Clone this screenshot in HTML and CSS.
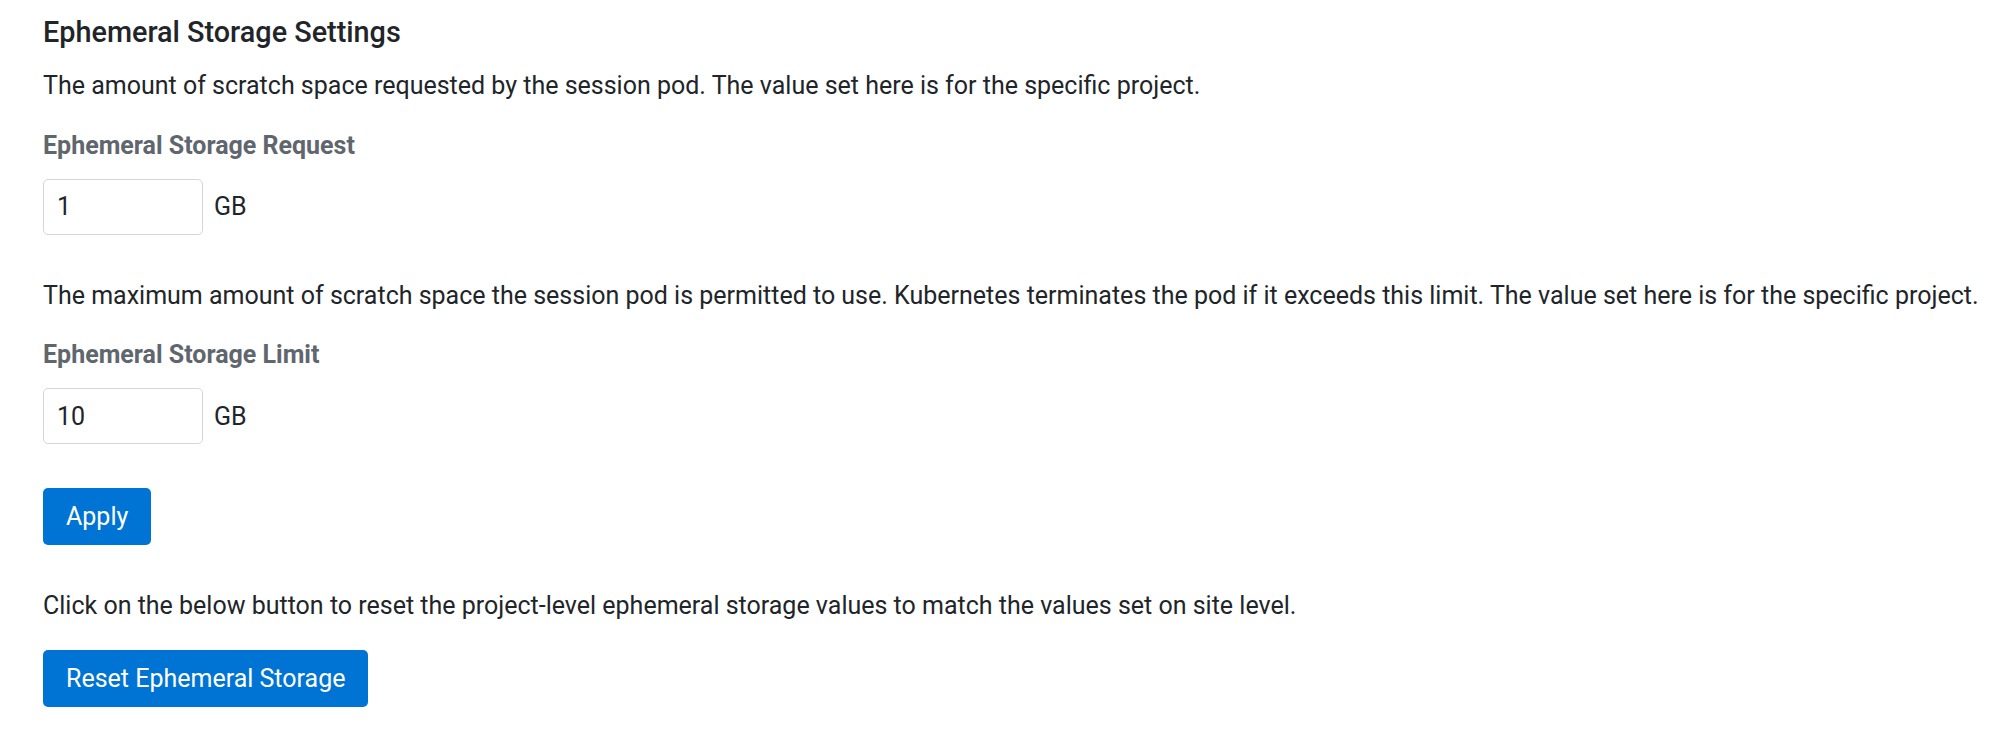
FILE: index.html
```html
<!DOCTYPE html>
<html>
<head>
	<meta charset="utf-8">
	<link rel="stylesheet" href="styles.css">
	<title>Ephemeral Storage Settings</title>
</head>
<body>
	<div class="settings">
		<h2 class="settings_title">Ephemeral Storage Settings</h2>

		<p class="help first">The amount of scratch space requested by the session pod. The value set here is for the specific project.</p>
		<div class="field">
			<label class="field_label" for="request">Ephemeral Storage Request</label>
			<div class="field_row">
				<input type="text" id="request" class="field_input" value="1">
				<span class="unit">GB</span>
			</div>
		</div>

		<p class="help">The maximum amount of scratch space the session pod is permitted to use. Kubernetes terminates the pod if it exceeds this limit. The value set here is for the specific project.</p>
		<div class="field">
			<label class="field_label" for="limit">Ephemeral Storage Limit</label>
			<div class="field_row">
				<input type="text" id="limit" class="field_input" value="10">
				<span class="unit">GB</span>
			</div>
		</div>

		<button class="btn apply_btn">Apply</button>

		<p class="help reset_help">Click on the below button to reset the project-level ephemeral storage values to match the values set on site level.</p>
		<button class="btn reset_btn">Reset Ephemeral Storage</button>
	</div>
</body>
</html>
```
FILE: styles.css
```css
body
{
	margin: 0;
	background: #ffffff;
	font-family: Roboto, "Liberation Sans", sans-serif;
	color: #212529;
}
.settings
{
	display: flex;
	flex-direction: column;
	align-items: flex-start;
	padding: 15px 0 15px 43px;
}
.settings_title
{
	margin: 0;
	font-size: 28.8px;
	font-weight: 500;
	line-height: 34px;
	color: #212529;
}
.help
{
	margin: 42px 0 0 0;
	font-size: 25px;
	line-height: 37.5px;
	white-space: nowrap;
}
.help.first
{
	margin-top: 18px;
}
.field
{
	display: flex;
	flex-direction: column;
	align-items: flex-start;
	margin-top: 22px;
}
.field_label
{
	font-size: 25px;
	font-weight: 700;
	line-height: 37.5px;
	color: #5f666d;
}
.field_row
{
	display: flex;
	align-items: center;
	gap: 11px;
	margin-top: 14.5px;
}
.field_input
{
	box-sizing: border-box;
	width: 160px;
	height: 56px;
	padding: 0 13px;
	border: 1px solid #d3d7db;
	border-radius: 5px;
	font-family: Roboto, "Liberation Sans", sans-serif;
	font-size: 25px;
	color: #212529;
	outline: none;
}
.unit
{
	font-size: 25px;
}
.btn
{
	box-sizing: border-box;
	height: 57px;
	padding: 0 23px;
	border: none;
	border-radius: 5px;
	background-color: #0074d4;
	color: #ffffff;
	font-family: Roboto, "Liberation Sans", sans-serif;
	font-size: 25px;
	cursor: pointer;
}
.apply_btn
{
	margin-top: 44px;
}
.reset_help
{
	margin-top: 42px;
}
.reset_btn
{
	margin-top: 25px;
}
```
